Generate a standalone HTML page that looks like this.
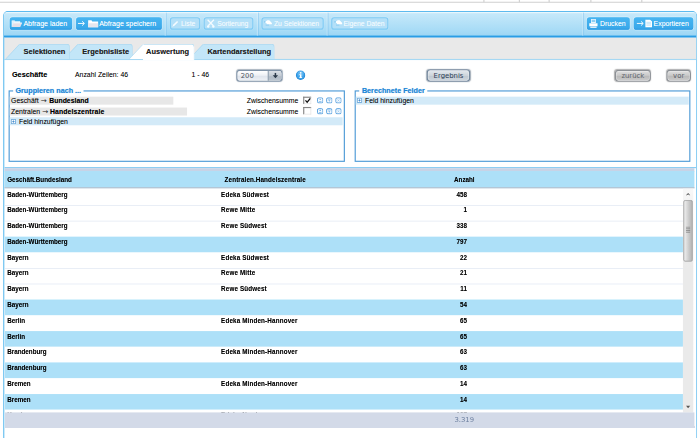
<!DOCTYPE html>
<html lang="de">
<head>
<meta charset="utf-8">
<title>Auswertung</title>
<style>
html,body{margin:0;padding:0;background:#fff;}
body{width:700px;height:438px;overflow:hidden;position:relative;}
#w{position:absolute;left:0;top:0;width:1224px;height:767px;transform:scale(0.572);transform-origin:0 0;font-family:"Liberation Sans",sans-serif;font-size:12px;color:#1a1a1a;overflow:hidden;}
#w *{box-sizing:border-box;}
.a{position:absolute;white-space:nowrap;}
/* top line */
#topline{left:0;top:3px;width:1224px;height:2px;background:#d6d6d6;}
.tick{top:0;width:1.5px;height:4px;background:#d0d0d0;}
/* panel */
#panel{left:5px;top:19.2px;width:1214px;height:760px;border:2px solid #7fc9f2;border-top:2px solid #5dbaee;border-bottom:0;border-radius:9px 9px 0 0;background:#fff;overflow:hidden;}
#o{left:-7px;top:-21.2px;width:1224px;height:767px;}
#tb{left:0;top:19px;width:1224px;height:44px;background:linear-gradient(#cbebfb,#c7e9fa 8%,#a6dbf6 80%,#9cd5f4);}
#tbh{left:0;top:21.1px;width:1224px;height:1.7px;background:rgba(255,255,255,.6);}
#tbb{left:0;top:62.4px;width:1224px;height:4px;background:linear-gradient(#3fabea,#2b9de5 30%,#2b9de5 85%,#4fb2ec);}
.btn{top:30px;height:22.4px;border-radius:5px;background:linear-gradient(#47b5f1,#37a7e9);box-shadow:0 0 0 1.5px rgba(255,255,255,.28), inset 0 -1.6px 0 rgba(30,135,215,.55);color:#fff;font-size:12.3px;line-height:24px;}
.btn.dis{top:29.6px;height:22.9px;background:#b4e0f8;box-shadow:0 0 0 1px rgba(255,255,255,.18);border:2px solid #80cbf4;color:#eef9fe;font-size:11.8px;text-shadow:0 0 1px rgba(255,255,255,.6);line-height:21.2px;}
.btn.dis span{top:0;margin-left:-2px;}
.btn.dis svg{margin:-2px 0 0 -2px;}
.btn svg{position:absolute;}
.btn span{position:absolute;top:0;}
.sep{top:22px;width:3px;height:41px;border-left:2px solid rgba(255,255,255,.3);border-right:1px solid rgba(110,185,235,.7);}
/* tabs */
#tabs{left:0;top:66.4px;width:1224px;height:36.8px;background:#e9e9e9;}
#tabl{left:0;top:103.1px;width:1224px;height:1.75px;background:#a6d8f3;}
.tab{top:77px;height:26.1px;background:#c3e6f8;border-top:1px solid #9ad2f0;border-right:1px solid #9ad2f0;font-weight:bold;font-size:13px;line-height:25.4px;color:#222;border-radius:0 5px 0 0;}
.tab.act{background:#fff;height:28px;}
.tab svg{position:absolute;left:-24px;top:-1px;}
.tab span{position:absolute;top:0;}
.tab{z-index:3;} .tab.t2{z-index:2;} .tab.t4{z-index:1;} .tab.act{z-index:4;}
/* info row */
.b13{font-weight:bold;font-size:13px;}
.gbtn{height:21.5px;border:2px solid #71859b;border-radius:6px;background:linear-gradient(#e4e9ee,#cdd4db 50%,#bfc8d1 55%,#cfd6dd);font-family:"DejaVu Sans",sans-serif;font-size:12px;line-height:18.6px;text-align:center;color:#2c3e55;box-shadow:0 0 2px rgba(60,80,100,.5), inset 0 0 0 1px rgba(255,255,255,.55);}
.gbtn.dis{color:#5f656c;border-color:#8d9196;background:linear-gradient(#dedede,#c8c8c8 50%,#bababa 55%,#cbcbcb);box-shadow:0 0 2px rgba(80,80,80,.5), inset 0 0 0 1px rgba(255,255,255,.5);}
#sel{left:413.3px;top:121.5px;width:80.4px;height:21.5px;border:2px solid #8093a8;border-radius:6px;background:linear-gradient(#ffffff,#eceff4 50%,#dfe4ec 55%,#eef1f6);font-family:"DejaVu Sans",sans-serif;font-size:12px;line-height:18.6px;color:#4a5260;box-shadow:0 0 1.5px rgba(60,80,100,.45);overflow:hidden;}
#sel i{position:absolute;left:53px;top:-1px;width:27px;height:20px;border-left:2px solid #8e9dad;background:linear-gradient(#dde2e8,#c2cad3 50%,#b0bac5 55%,#bfc8d1);}
/* fieldsets */
.fs{border:2px solid #4d9ad6;height:125.5px;top:157.5px;}
.lg{top:151.5px;background:#fff;color:#1c85d6;font-weight:bold;font-size:12.6px;line-height:15px;padding:0 4px 0 4.5px;}
.grow{height:14.2px;background:#e7e7e7;}
.hl{height:14px;background:#d3eaf8;}
.t12{font-size:12px;line-height:14px;}
.cb{width:13.5px;height:13px;border:2px solid #858585;border-right:1px solid #dcdcdc;border-bottom:1px solid #dcdcdc;background:#fff;}
.ic{width:9.5px;height:10.5px;border:1.5px solid #2a8ad6;border-radius:2.5px;background:#e8f4fc;}
.plus{width:8.5px;height:8.5px;border:1.3px solid #3a78b8;border-radius:1.5px;background:#fff;}
/* table */
#hline{left:8px;top:292px;width:1211px;height:1.75px;background:#8ccdf2;}
#hband{left:8px;top:294.4px;width:1206px;height:6px;background:#c8d3e6;}
#hdr{left:8px;top:299.2px;width:1206px;height:29.6px;background:#ade0f8;border-bottom:2px solid #b3c6d6;font-weight:bold;font-size:11px;line-height:33.4px;}
#hshadow{left:8px;top:328.8px;width:1206px;height:2.2px;background:linear-gradient(#d5dde4,#fff);}
#tbl{left:8px;top:331px;width:1186px;height:390px;overflow:hidden;}
.r{position:relative;height:27.52px;border-top:1px solid #d9e1ef;font-weight:bold;font-size:11px;line-height:14px;}
.r:first-child{border-top-color:transparent;}
.r.s{background:#ade0f8;border-top-color:#ade0f8;}
.r.s + .r{border-top-color:transparent;}
.r span{position:absolute;top:0.9px;white-space:nowrap;}
.c1{left:4.5px;} .c2{left:378.5px;letter-spacing:.25px;} .c3{right:377.7px;text-align:right;}
#sb{left:1194px;top:329.5px;width:17.6px;height:391.2px;background:linear-gradient(#f8f8f8,#f4f4f4 20px,#eaeaea 140px);}
#thumb{left:1194.7px;top:350.3px;width:16.6px;height:107.2px;border:1px solid #8a8a8a;border-radius:3px;background:linear-gradient(90deg,#f1f1f1,#dadada 35%,#c4c4c4 70%,#b5b5b5);box-shadow:0 0 1px rgba(0,0,0,.3);}
#foot{left:8px;top:721px;width:1206px;height:26.7px;background:#d3dae8;font-family:"DejaVu Sans",sans-serif;font-size:12px;line-height:26px;color:#6c7f9f;}
.ar{font-family:"DejaVu Sans",sans-serif;font-size:12.5px;line-height:14px;color:#333;}
#w{color:#000;}
.r, #hdr, .tab, .t12 b{text-shadow:0 0 1.1px rgba(0,0,0,.38);}
.b13{text-shadow:0 0 1px rgba(0,0,0,.3);font-size:12.8px;}
.t12{text-shadow:0 0 1px rgba(0,0,0,.22);}
.lg{text-shadow:0 0 1.2px rgba(28,133,214,.5);}
.btn{text-shadow:0 0 1px rgba(255,255,255,.45);}
#lb{left:7px;top:66px;width:1.2px;height:720px;background:#a9daf4;}

</style>
</head>
<body>
<div id="w">
  <div id="topline" class="a"></div>
  <div class="a tick" style="left:845px"></div>
  <div class="a tick" style="left:907px"></div>
  <div class="a tick" style="left:959px"></div>
  <div class="a tick" style="left:1032px"></div>
  <div class="a tick" style="left:1121px"></div>
  <div id="panel" class="a"><div id="o" class="a">
    <div id="tb" class="a"></div><div id="tbb" class="a"></div><div id="tbh" class="a"></div>
    <div class="a btn" style="left:16.6px;width:109.3px;"><svg style="left:3.5px;top:4.6px" width="19" height="13" viewBox="0 0 19 13"><path d="M.5 12V1.2h5l1.2 1.6h8.3V5" fill="#dff1fc" stroke="#f4fbff" stroke-width="1"/><path d="M.6 12.4L4 5h14.6l-3.2 7.4z" fill="#e6dfe8"/><path d="M4 5h14.6" stroke="#fff" stroke-width="1.2"/></svg><span style="left:24.3px">Abfrage laden</span></div>
    <div class="a btn" style="left:133px;width:149.9px;"><svg style="left:3.2px;top:6.2px" width="13" height="10" viewBox="0 0 13 10"><path d="M0 5h11M7.5 1.2L11.6 5 7.5 8.8" stroke="#fff" stroke-width="1.6" fill="none"/></svg><svg style="left:20.7px;top:4.6px" width="18" height="13" viewBox="0 0 18 13"><path d="M0 13V.6h6l1.3 2H18V13z" fill="#fff"/><path d="M0 13V5.5h18V13z" fill="#e4e6ee"/></svg><span style="left:40.4px">Abfrage speichern</span></div>
    <div class="a sep" style="left:288px"></div>
    <div class="a btn dis" style="left:296.7px;width:53px;"><svg style="left:3px;top:5px" width="13" height="13" viewBox="0 0 13 13"><path d="M1.2 11.8L3 8 9.5 1.5l2 2L5 10z" fill="#f4fbff"/></svg><span style="left:19.9px">Liste</span></div>
    <div class="a btn dis" style="left:356px;width:87.4px;"><svg style="left:4.8px;top:3.6px" width="15" height="16" viewBox="0 0 15 16"><path d="M2 1.5L12 12M13 1.5L3 12" stroke="#f4fbff" stroke-width="2.1" fill="none"/><circle cx="3" cy="13.3" r="2.1" fill="#f4fbff"/><circle cx="12" cy="13.3" r="2.1" fill="#f4fbff"/></svg><span style="left:23.6px">Sortierung</span></div>
    <div class="a sep" style="left:448.7px"></div>
    <div class="a btn dis" style="left:457px;width:109.3px;"><svg style="left:4.4px;top:5.6px" width="15" height="10" viewBox="0 0 15 10"><path d="M.3 2.2h3v2.2h-3z" fill="#86c9f0"/><path d="M3.2 2.6L6.5.4h3.2l4.6 4.8v2.4H5V5.2H3.2z" fill="#fff"/><path d="M3.4 8.4h5.8v1.2H3.4z" fill="#74bfee"/></svg><span style="left:22px">Zu Selektionen</span></div>
    <div class="a sep" style="left:571px"></div>
    <div class="a btn dis" style="left:579.4px;width:100px;"><svg style="left:4.4px;top:5.6px" width="15" height="10" viewBox="0 0 15 10"><path d="M.3 2.2h3v2.2h-3z" fill="#86c9f0"/><path d="M3.2 2.6L6.5.4h3.2l4.6 4.8v2.4H5V5.2H3.2z" fill="#fff"/><path d="M3.4 8.4h5.8v1.2H3.4z" fill="#74bfee"/></svg><span style="left:21.3px">Eigene Daten</span></div>
    <div class="a sep" style="left:1017.6px"></div>
    <div class="a btn" style="left:1026.1px;width:75.3px;"><svg style="left:4.2px;top:3px" width="15" height="16" viewBox="0 0 15 16"><path d="M3.2 0h8.6v7H3.2z" fill="#e9f5fd"/><path d="M4.5 1.5h6v4h-6z" fill="#8fcff3"/><path d="M0 7.5h15v5.2H0z" fill="#fff"/><path d="M2 13.2h11V16H2z" fill="#d8ecf9"/></svg><span style="left:22.9px;font-size:12px">Drucken</span></div>
    <div class="a btn" style="left:1108.2px;width:103.5px;"><svg style="left:4.4px;top:6.2px" width="13" height="10" viewBox="0 0 13 10"><path d="M0 5h11M7.5 1.2L11.6 5 7.5 8.8" stroke="#fff" stroke-width="1.6" fill="none"/></svg><svg style="left:19.5px;top:4px" width="12" height="14" viewBox="0 0 12 14"><path d="M0 0h8l4 3.5V14H0z" fill="#fff"/><path d="M2 5h8M2 7.5h8M2 10h8" stroke="#a8d9f5" stroke-width="1.2"/></svg><span style="left:34.5px;font-size:12px">Exportieren</span></div>
    <div id="tabs" class="a"></div><div id="lb" class="a"></div><div id="tabl" class="a"></div>
    <div class="a tab" style="left:33.7px;width:88px;"><svg width="25.5" height="26.1" viewBox="0 0 25.5 26.1"><path d="M0 26.1 L24 0 L25.5 0 L25.5 26.1Z" fill="#c3e6f8"/><path d="M0 26.1 L24 .5" stroke="#9ad2f0" fill="none"/></svg><span style="left:7.6px">Selektionen</span></div>
    <div class="a tab t2" style="left:136.4px;width:96px;"><svg width="25.5" height="26.1" viewBox="0 0 25.5 26.1"><path d="M0 26.1 L24 0 L25.5 0 L25.5 26.1Z" fill="#c3e6f8"/><path d="M0 26.1 L24 .5" stroke="#9ad2f0" fill="none"/></svg><span style="left:7.6px">Ergebnisliste</span></div>
    <div class="a tab act" style="left:249.8px;width:90.4px;"><svg width="25.5" height="26.1" viewBox="0 0 25.5 26.1"><path d="M0 26.1 L24 0 L25.5 0 L25.5 26.1Z" fill="#fff"/><path d="M0 26.1 L24 .5" stroke="#9ad2f0" fill="none"/></svg><span style="left:5.6px">Auswertung</span></div>
    <div class="a tab t4" style="left:354.7px;width:125.4px;"><svg width="25.5" height="26.1" viewBox="0 0 25.5 26.1"><path d="M0 26.1 L24 0 L25.5 0 L25.5 26.1Z" fill="#c3e6f8"/><path d="M0 26.1 L24 .5" stroke="#9ad2f0" fill="none"/></svg><span style="left:7.9px">Kartendarstellung</span></div>

    <!-- info row -->
    <div class="a b13" style="left:20.8px;top:122.6px;line-height:15px;">Geschäfte</div>
    <div class="a t12" style="left:131.1px;top:123.5px;">Anzahl Zeilen: 46</div>
    <div class="a t12" style="left:335px;top:123.5px;">1 - 46</div>
    <div id="sel" class="a"><span style="position:absolute;left:5.5px;top:0">200</span><i></i>
      <svg style="position:absolute;left:59.5px;top:3.6px" width="13" height="11" viewBox="0 0 13 11"><path d="M5.2 0h2.6v4.5h3.4L6.5 10 1.8 4.5h3.4z" fill="#2c3a4a"/></svg></div>
    <svg class="a" style="left:516.9px;top:123.4px" width="17" height="17" viewBox="0 0 17 17"><circle cx="8.5" cy="8.5" r="8.2" fill="#2387d6"/><circle cx="8.5" cy="8" r="6.9" fill="#3ea3ea"/><circle cx="8.5" cy="5.8" r="5" fill="#6cbcf2" opacity=".7"/><circle cx="8.7" cy="4.4" r="1.6" fill="#fff"/><path d="M6.2 6.9h3.8v5.2h1.1v1.4H6.2v-1.4h1.2V8.3H6.2z" fill="#fff"/></svg>
    <div class="a gbtn" style="left:745.8px;top:121.3px;width:76.6px;">Ergebnis</div>
    <div class="a gbtn dis" style="left:1074.5px;top:121.8px;width:63.8px;">zurück</div>
    <div class="a gbtn dis" style="left:1164.7px;top:121.8px;width:43.6px;">vor</div>
    <!-- fieldsets -->
    <div class="a fs" style="left:15.4px;width:588px;"></div>
    <div class="a lg" style="left:22.5px;">Gruppieren nach ...</div>
    <div class="a grow" style="left:17.4px;top:168.9px;width:285.6px;"></div>
    <div class="a grow" style="left:17.4px;top:187.6px;width:309.7px;"></div>
    <div class="a hl" style="left:17.4px;top:205.3px;width:582px;"></div>
    <div class="a t12" style="left:19.4px;top:169px;">Geschäft <span class="ar">→</span><b class="a" style="left:66.8px;top:0">Bundesland</b></div>
    <div class="a t12" style="left:19.4px;top:187.7px;">Zentralen <span class="ar">→</span><b class="a" style="left:68px;top:0;letter-spacing:.2px">Handelszentrale</b></div>
    <svg class="a" style="left:19.3px;top:207.8px" width="9" height="9" viewBox="0 0 9 9"><rect x=".6" y=".6" width="7.8" height="7.8" rx="1.3" fill="#fff" stroke="#2f7fc8" stroke-width="1.2"/><path d="M2.4 4.5h4.2M4.5 2.4v4.2" stroke="#2f7fc8" stroke-width="1.2"/></svg>
    <div class="a t12" style="left:33.2px;top:205.4px;">Feld hinzufügen</div>
    <div class="a t12" style="left:431.5px;top:169px;">Zwischensumme</div>
    <div class="a t12" style="left:431.5px;top:187.7px;">Zwischensumme</div>
    <div class="a cb" style="left:530px;top:169px;"><svg style="position:absolute;left:-.5px;top:-1.5px" width="12" height="12" viewBox="0 0 12 12"><path d="M2 5.5l3 3.2L10.5 2" stroke="#111" stroke-width="2.2" fill="none"/></svg></div>
    <div class="a cb" style="left:530px;top:186.8px;"></div>
    <svg class="a" style="left:553.7px;top:169.8px" width="11.5" height="11" viewBox="0 0 11.5 11"><rect x="1" y="1" width="9.5" height="9" rx="2.4" fill="#f6fafe" stroke="#3f93da" stroke-width="1.55"/><path d="M4 4.5L5.75 3 7.5 4.5z" fill="#2f86d4"/><path d="M3.4 7.6h4.7" stroke="#4a9be0" stroke-width="1"/></svg>
    <svg class="a" style="left:569.5px;top:169.8px" width="11.5" height="11" viewBox="0 0 11.5 11"><rect x="1" y="1" width="9.5" height="9" rx="2.4" fill="#f6fafe" stroke="#3f93da" stroke-width="1.55"/><path d="M3.4 3.4h4.7" stroke="#4a9be0" stroke-width="1"/><path d="M4 5.8L5.75 7.6 7.5 5.8z" fill="#2f86d4"/></svg>
    <svg class="a" style="left:585.7px;top:169.8px" width="11.5" height="11" viewBox="0 0 11.5 11"><rect x="1" y="1" width="9.5" height="9" rx="2.4" fill="#f6fafe" stroke="#3f93da" stroke-width="1.55"/><path d="M3.9 3.7l3.7 3.6M7.6 3.7L3.9 7.3" stroke="#7db9ea" stroke-width="1"/></svg>
    <svg class="a" style="left:553.7px;top:188.8px" width="11.5" height="11" viewBox="0 0 11.5 11"><rect x="1" y="1" width="9.5" height="9" rx="2.4" fill="#f6fafe" stroke="#3f93da" stroke-width="1.55"/><path d="M4 4.5L5.75 3 7.5 4.5z" fill="#2f86d4"/><path d="M3.4 7.6h4.7" stroke="#4a9be0" stroke-width="1"/></svg>
    <svg class="a" style="left:569.5px;top:188.8px" width="11.5" height="11" viewBox="0 0 11.5 11"><rect x="1" y="1" width="9.5" height="9" rx="2.4" fill="#f6fafe" stroke="#3f93da" stroke-width="1.55"/><path d="M3.4 3.4h4.7" stroke="#4a9be0" stroke-width="1"/><path d="M4 5.8L5.75 7.6 7.5 5.8z" fill="#2f86d4"/></svg>
    <svg class="a" style="left:585.7px;top:188.8px" width="11.5" height="11" viewBox="0 0 11.5 11"><rect x="1" y="1" width="9.5" height="9" rx="2.4" fill="#f6fafe" stroke="#3f93da" stroke-width="1.55"/><path d="M3.9 3.7l3.7 3.6M7.6 3.7L3.9 7.3" stroke="#7db9ea" stroke-width="1"/></svg>
    <div class="a fs" style="left:620.4px;width:586.5px;"></div>
    <div class="a lg" style="left:628.2px;">Berechnete Felder</div>
    <div class="a hl" style="left:622.4px;top:168.6px;width:582px;"></div>
    <svg class="a" style="left:623.6px;top:171.1px" width="9" height="9" viewBox="0 0 9 9"><rect x=".6" y=".6" width="7.8" height="7.8" rx="1.3" fill="#fff" stroke="#2f7fc8" stroke-width="1.2"/><path d="M2.4 4.5h4.2M4.5 2.4v4.2" stroke="#2f7fc8" stroke-width="1.2"/></svg>
    <div class="a t12" style="left:638.2px;top:168.7px;">Feld hinzufügen</div>
    <!-- table -->
    <div id="hline" class="a"></div>
    <div id="hband" class="a"></div>
    <div id="hdr" class="a"><span class="a" style="left:4.5px">Geschäft.Bundesland</span><span class="a" style="left:384.7px;letter-spacing:.2px">Zentralen.Handelszentrale</span><span class="a" style="left:785.7px">Anzahl</span></div>
    <div id="hshadow" class="a"></div>
    <div id="tbl" class="a">
<div class="r"><span class="c1">Baden-Württemberg</span><span class="c2">Edeka Südwest</span><span class="c3">458</span></div>
<div class="r"><span class="c1">Baden-Württemberg</span><span class="c2">Rewe Mitte</span><span class="c3">1</span></div>
<div class="r"><span class="c1">Baden-Württemberg</span><span class="c2">Rewe Südwest</span><span class="c3">338</span></div>
<div class="r s"><span class="c1">Baden-Württemberg</span><span class="c2"></span><span class="c3">797</span></div>
<div class="r"><span class="c1">Bayern</span><span class="c2">Edeka Südwest</span><span class="c3">22</span></div>
<div class="r"><span class="c1">Bayern</span><span class="c2">Rewe Mitte</span><span class="c3">21</span></div>
<div class="r"><span class="c1">Bayern</span><span class="c2">Rewe Südwest</span><span class="c3">11</span></div>
<div class="r s"><span class="c1">Bayern</span><span class="c2"></span><span class="c3">54</span></div>
<div class="r"><span class="c1">Berlin</span><span class="c2">Edeka Minden-Hannover</span><span class="c3">65</span></div>
<div class="r s"><span class="c1">Berlin</span><span class="c2"></span><span class="c3">65</span></div>
<div class="r"><span class="c1">Brandenburg</span><span class="c2">Edeka Minden-Hannover</span><span class="c3">63</span></div>
<div class="r s"><span class="c1">Brandenburg</span><span class="c2"></span><span class="c3">63</span></div>
<div class="r"><span class="c1">Bremen</span><span class="c2">Edeka Minden-Hannover</span><span class="c3">14</span></div>
<div class="r s"><span class="c1">Bremen</span><span class="c2"></span><span class="c3">14</span></div>
<div class="r"><span class="c1">Hamburg</span><span class="c2">Edeka Nord</span><span class="c3">127</span></div>

    </div>
    <div id="sb" class="a">
      <svg style="position:absolute;left:5.2px;top:7px" width="8" height="5" viewBox="0 0 8 5"><path d="M0 5L4 .3 8 5 6.6 5 4 2.6 1.4 5z" fill="#444"/></svg>
      <svg style="position:absolute;left:5.2px;top:379px" width="8" height="5" viewBox="0 0 8 5"><path d="M0 0L4 4.7 8 0z" fill="#555"/></svg>
    </div>
    <div id="thumb" class="a"><svg style="position:absolute;left:3.5px;top:45px" width="8" height="12" viewBox="0 0 8 12"><path d="M0 1h8M0 4h8M0 7h8M0 10h8" stroke="#777" stroke-width="1.2"/></svg></div>
    <div id="foot" class="a"><span class="a" style="left:786.5px;top:0">3.319</span></div>
  </div></div>
</div>

</body>
</html>
